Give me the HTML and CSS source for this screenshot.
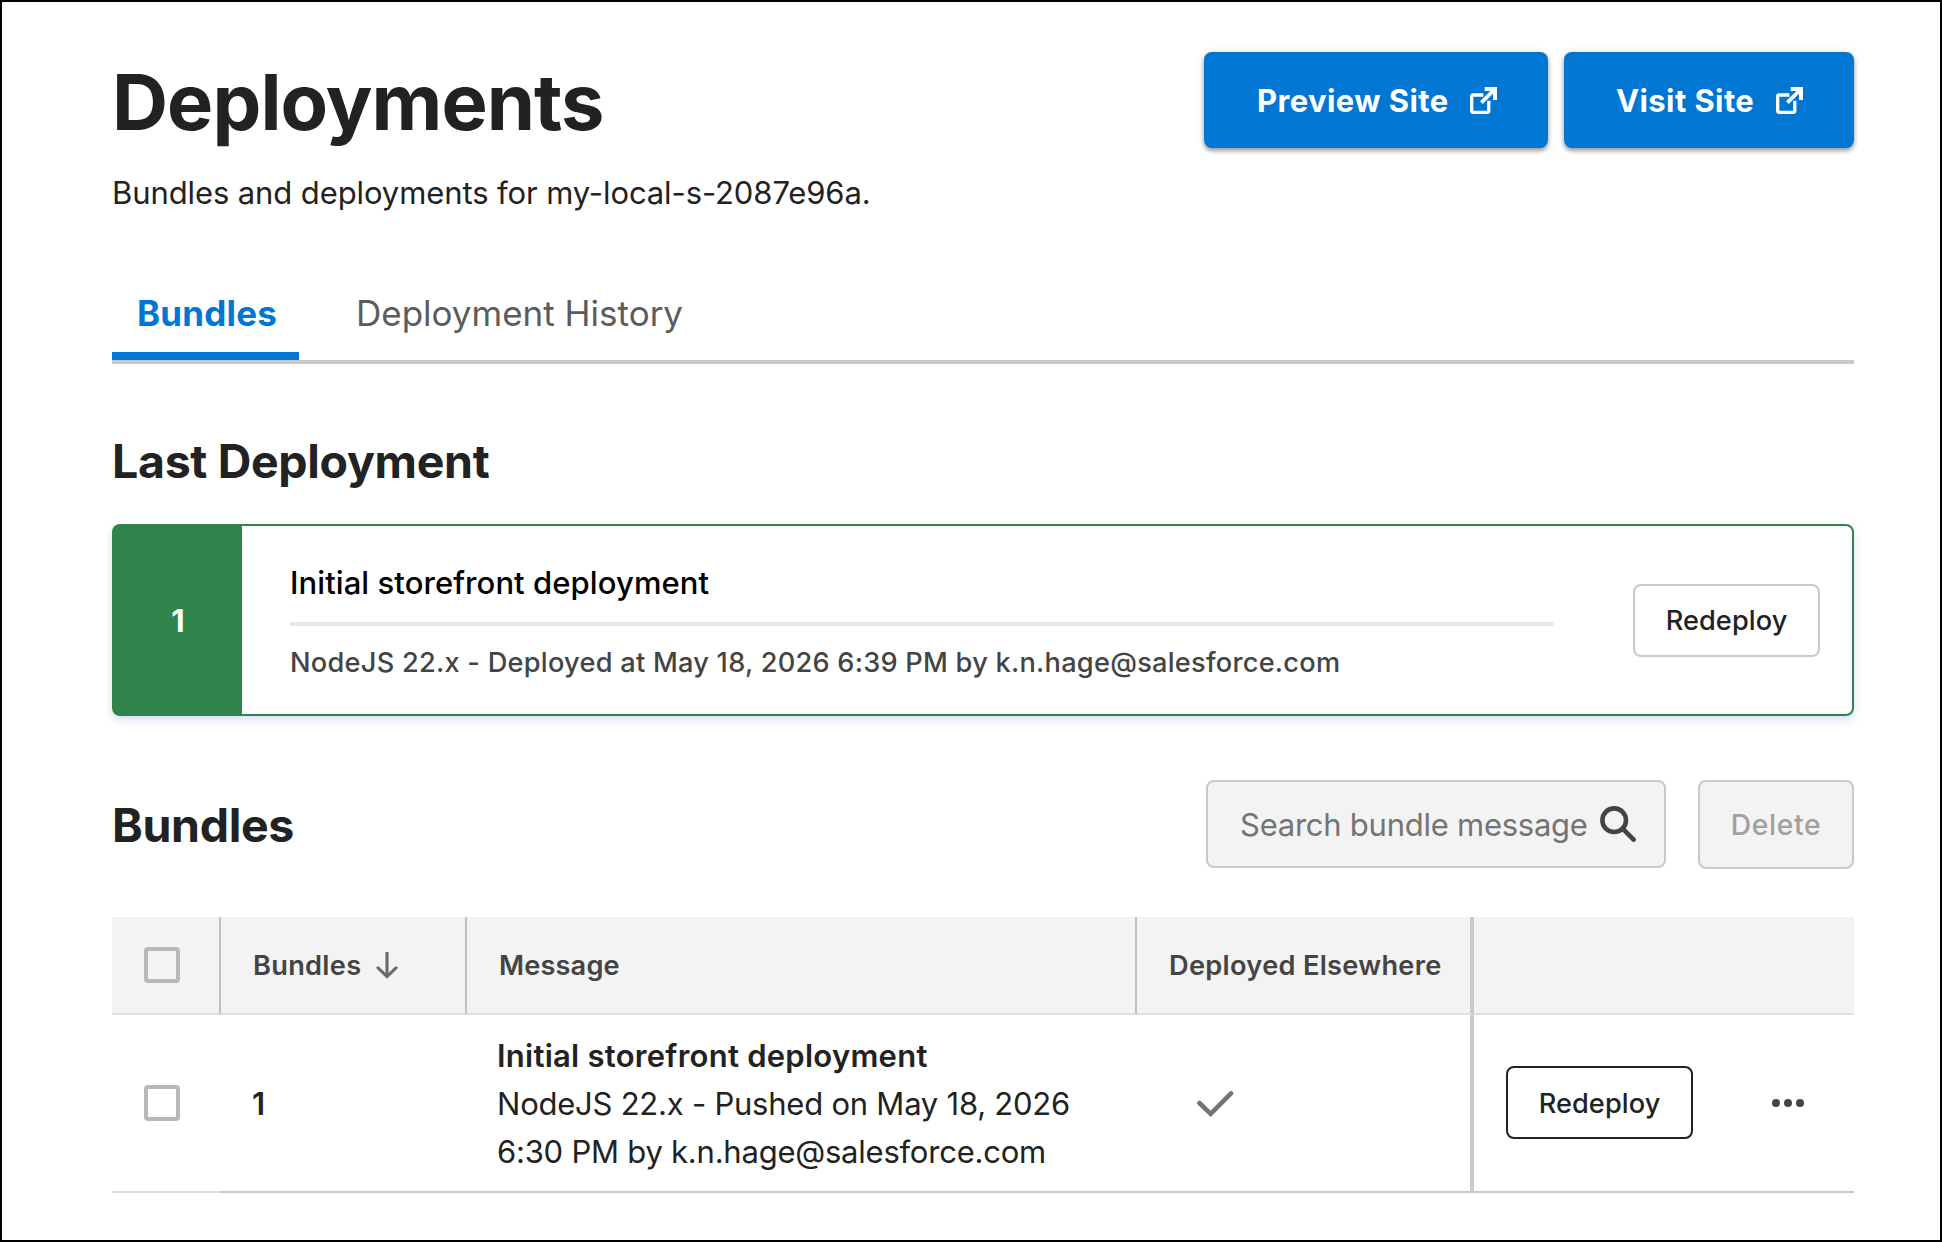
FILE: index.html
```
<!DOCTYPE html>
<html lang="en">
<head>
    <meta charset="UTF-8">
    <meta name="viewport" content="width=device-width, initial-scale=1.0">
    <title>Deployments</title>
    <link rel="stylesheet" href="styles.css">
</head>
<body>
    <div class="page">

        <header class="header">
            <div>
                <h1>Deployments</h1>
                <p class="subtitle">Bundles and deployments for my-local-s-2087e96a.</p>
            </div>
            <div class="site-links">
                <a class="btn-primary">Preview Site
                    <svg width="27" height="27" viewBox="0 0 27 27" fill="none" stroke="#fff">
                        <path d="M13.4 8H3.2a1.5 1.5 0 0 0-1.5 1.5V23.8a1.5 1.5 0 0 0 1.5 1.5H17.3a1.5 1.5 0 0 0 1.5-1.5V13.8" stroke-width="3.3"/>
                        <path d="M11.4 15.6L24 3" stroke-width="3.8"/>
                        <path d="M14.7 2H25V13" stroke-width="4"/>
                    </svg>
                </a>
                <a class="btn-primary">Visit Site
                    <svg width="27" height="27" viewBox="0 0 27 27" fill="none" stroke="#fff">
                        <path d="M13.4 8H3.2a1.5 1.5 0 0 0-1.5 1.5V23.8a1.5 1.5 0 0 0 1.5 1.5H17.3a1.5 1.5 0 0 0 1.5-1.5V13.8" stroke-width="3.3"/>
                        <path d="M11.4 15.6L24 3" stroke-width="3.8"/>
                        <path d="M14.7 2H25V13" stroke-width="4"/>
                    </svg>
                </a>
            </div>
        </header>

        <nav class="tabs">
            <a class="tab active">Bundles</a>
            <a class="tab">Deployment History</a>
        </nav>

        <h2 class="last-title">Last Deployment</h2>
        <div class="card">
            <div class="card-number">1</div>
            <div class="card-body">
                <div class="card-message">Initial storefront deployment</div>
                <div class="card-meta">NodeJS 22.x - Deployed at May 18, 2026 6:39 PM by k.n.hage@salesforce.com</div>
            </div>
            <button class="btn">Redeploy</button>
        </div>

        <div class="toolbar">
            <h2>Bundles</h2>
            <div class="search">
                <input type="text" placeholder="Search bundle message">
                <svg width="36" height="36" viewBox="0 0 36 36" fill="none" stroke="#444" stroke-width="4.6">
                    <circle cx="14.2" cy="14.2" r="11.8"/>
                    <path d="M22.6 22.6L33.6 33.6" stroke-linecap="round"/>
                </svg>
            </div>
            <button class="btn delete" disabled>Delete</button>
        </div>

        <table class="bundles">
            <colgroup>
                <col class="c-check">
                <col class="c-id">
                <col class="c-message">
                <col class="c-deployed">
                <col class="c-actions">
            </colgroup>
            <thead>
                <tr>
                    <th><span class="checkbox"></span></th>
                    <th>
                        <div class="sort">Bundles
                            <svg width="22" height="27" viewBox="0 0 22 27" fill="none" stroke="#6b6b6b" stroke-width="3.1">
                                <path d="M11 0V24.5"/>
                                <path d="M2 15.8L11 24.6L20 15.8" stroke-linecap="round"/>
                            </svg>
                        </div>
                    </th>
                    <th>Message</th>
                    <th>Deployed Elsewhere</th>
                    <th></th>
                </tr>
            </thead>
            <tbody>
                <tr>
                    <td><span class="checkbox"></span></td>
                    <td class="id">1</td>
                    <td class="message">
                        <b>Initial storefront deployment</b><br>
                        NodeJS 22.x - Pushed on May 18, 2026<br>
                        6:30 PM by k.n.hage@salesforce.com
                    </td>
                    <td class="deployed">
                        <svg width="38" height="28" viewBox="0 0 38 28" fill="none" stroke="#747474" stroke-width="4.6" stroke-linecap="round">
                            <path d="M3.4 14L14.7 24.8L35 4.4"/>
                        </svg>
                    </td>
                    <td>
                        <div class="actions">
                            <button class="btn dark">Redeploy</button>
                            <svg width="32" height="8" viewBox="0 0 32 8" fill="#444">
                                <circle cx="4" cy="4" r="4"/>
                                <circle cx="16" cy="4" r="4"/>
                                <circle cx="28" cy="4" r="4"/>
                            </svg>
                        </div>
                    </td>
                </tr>
            </tbody>
        </table>

    </div>
</body>
</html>
```
FILE: styles.css
```
* {
    box-sizing: border-box;
}
body {
    margin: 0;
    font-family: Inter, "Liberation Sans", sans-serif;
    font-size: 31px;
    color: #222;
    background-color: #fff;
}
svg {
    display: block;
    flex: none;
}
.page {
    height: 1242px;
    padding: 50px 86px 0 110px;
    border: 2px solid #000;
}
.header {
    display: flex;
    justify-content: space-between;
    align-items: flex-start;
}
h1 {
    margin: 2px 0 0;
    font-size: 77.6px;
    line-height: 96px;
    letter-spacing: -0.93px;
}
.subtitle {
    margin: 19px 0 0;
    line-height: 48px;
    letter-spacing: -0.1px;
}
.site-links {
    display: flex;
    gap: 16px;
}
.btn-primary {
    display: flex;
    align-items: center;
    justify-content: space-between;
    width: 344px;
    height: 96px;
    padding: 0 51px 0 53px;
    border-radius: 8px;
    background-color: #0176d3;
    color: #fff;
    font-weight: 650;
    letter-spacing: 0.4px;
    box-shadow: 0 3px 4px rgba(0, 0, 0, 0.35), 0 0 8px rgba(0, 0, 0, 0.1);
}
.btn-primary + .btn-primary {
    width: 290px;
    padding-left: 52px;
}

/* tabs */
.tabs {
    display: flex;
    gap: 32px;
    margin-top: 65px;
    border-bottom: 4px solid #c9c9c9;
}
.tab {
    height: 78px;
    padding: 7px 24px 0 25px;
    font-size: 35px;
    line-height: 48px;
    color: #5c5c5c;
}
.tab.active {
    width: 187px;
    border-bottom: 8px solid #0176d3;
    color: #0176d3;
    font-weight: 650;
    letter-spacing: 0.2px;
}

h2 {
    margin: 0;
    font-size: 46.5px;
    line-height: 48px;
    letter-spacing: -0.33px;
}
.last-title {
    margin-top: 73px;
}

/* last deployment */
.card {
    display: flex;
    align-items: center;
    height: 192px;
    margin-top: 39px;
    padding-right: 32px;
    border: 2px solid #2e844a;
    border-radius: 8px;
    box-shadow: 0 4px 8px rgba(60, 90, 200, 0.2);
}
.card-number {
    display: flex;
    align-items: center;
    justify-content: center;
    align-self: stretch;
    width: 128px;
    background-color: #2e844a;
    color: #fff;
    font-weight: 700;
}
.card-body {
    flex: 1;
    align-self: stretch;
    margin: 0 80px 0 48px;
    padding-top: 37px;
}
.card-message {
    padding-bottom: 19px;
    border-bottom: 4px solid #e5e5e5;
    line-height: 40px;
    font-weight: 500;
    letter-spacing: 0.08px;
    color: #000;
}
.card-meta {
    margin-top: 19px;
    font-size: 27.2px;
    font-weight: 450;
    line-height: 36px;
    letter-spacing: 0.25px;
    color: #444;
}
.btn {
    width: 187px;
    height: 73px;
    padding: 1px 0 0;
    border: 2px solid #c9c9c9;
    border-radius: 8px;
    background-color: #fff;
    color: #222;
    font: 500 27.2px Inter, "Liberation Sans", sans-serif;
    letter-spacing: 0.06px;
}
.btn.dark {
    border-color: #222;
}

/* search and delete */
.toolbar {
    display: flex;
    margin-top: 64px;
}
.toolbar h2 {
    margin: 21px auto 0 0;
}
.search {
    display: flex;
    align-items: center;
    justify-content: space-between;
    width: 460px;
    height: 88px;
    padding: 0 28px 0 32px;
    border: 2px solid #c9c9c9;
    border-radius: 8px;
    background-color: #f3f3f3;
}
.search input {
    width: 354px;
    padding: 0;
    border: none;
    background: transparent;
    font: 31px Inter, "Liberation Sans", sans-serif;
    letter-spacing: -0.25px;
}
.search input::placeholder {
    color: #747474;
}
.btn.delete {
    width: 156px;
    height: 89px;
    margin-left: 32px;
    background-color: #f3f3f3;
    color: #a0a0a0;
    font-size: 28.2px;
    letter-spacing: 0.7px;
}

/* table */
.bundles {
    width: 100%;
    margin-top: 48px;
    table-layout: fixed;
    border-spacing: 0;
}
.c-check { width: 109px; }
.c-id { width: 246px; }
.c-message { width: 670px; }
.c-deployed { width: 337px; }
th {
    height: 98px;
    padding: 0 0 0 32px;
    border-right: 2px solid #c0c0c0;
    border-bottom: 2px solid #e0e0e0;
    background-color: #f3f3f3;
    color: #444;
    font-size: 27.2px;
    font-weight: 600;
    letter-spacing: 0.3px;
    text-align: left;
}
th:nth-child(3) {
    letter-spacing: 0.15px;
}
td {
    height: 178px;
    padding: 0 0 0 30px;
    border-bottom: 2px solid #c9c9c9;
    line-height: 48px;
}
th:first-child, td:first-child {
    padding-left: 32px;
}
td:first-child {
    border-bottom-color: #dedede;
}
th:nth-child(4), td:nth-child(4) {
    border-right: 4px solid #c9c9c9;
}
th:last-child {
    border-right: none;
}
.checkbox {
    display: block;
    width: 36px;
    height: 36px;
    border: 4px solid #b8b8b8;
    border-radius: 4px;
}
.sort {
    display: flex;
    align-items: center;
    gap: 15px;
}
.id {
    padding: 1px 0 0 31px;
    font-weight: 600;
}
.message {
    padding-top: 2px;
    letter-spacing: -0.23px;
}
.message b {
    font-weight: 600;
    letter-spacing: 0.26px;
}
td.deployed {
    padding-left: 59px;
}
.actions {
    display: flex;
    align-items: center;
    gap: 79px;
    padding: 0 0 1px 2px;
}
```
